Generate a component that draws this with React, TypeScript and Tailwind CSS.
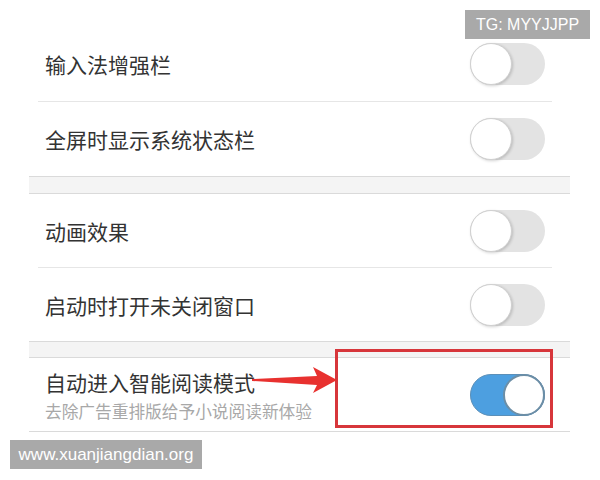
import React from "react";

const Toggle = ({ on = false }: { on?: boolean }) =>
  on ? (
    <div className="relative w-[75px] h-[42px] rounded-full bg-[#4d9fe0] border border-[#5b8fb8]">
      <div className="absolute right-[-1px] top-[-1px] w-[42px] h-[42px] rounded-full bg-white border-2 border-[#6c8ea6]" />
    </div>
  ) : (
    <div className="relative w-[75px] h-[42px] rounded-full bg-[#e3e3e3]">
      <div className="absolute left-0 top-0 w-[42px] h-[42px] rounded-full bg-white border border-[#d0d0d0] shadow-[1px_1px_3px_rgba(0,0,0,0.18)]" />
    </div>
  );

const Row = ({ label, h, on }: { label: string; h: string; on?: boolean }) => (
  <div className={`flex items-center justify-between pl-[16px] pr-[25px] ${h}`}>
    <span className="text-[21px] leading-[28px] text-[#333]">{label}</span>
    <Toggle on={on} />
  </div>
);

const Divider = () => <div className="h-px bg-[#e6e6e6] ml-[9px] mr-[18px]" />;

const Section = () => (
  <div className="border-y border-[#dadada] bg-[#f4f4f4] h-[18px]" />
);

export default function App() {
  return (
    <div
      className="relative w-[600px] h-[480px] bg-white overflow-hidden"
      style={{ fontFamily: '"Noto Sans CJK SC", "Noto Sans", sans-serif' }}
    >
      <div className="ml-[29px] w-[541px] pt-[26px]">
        <Row label="输入法增强栏" h="h-[75px]" />
        <Divider />
        <Row label="全屏时显示系统状态栏" h="h-[74px]" />
        <Section />
        <Row label="动画效果" h="h-[73px]" />
        <Divider />
        <Row label="启动时打开未关闭窗口" h="h-[73px]" />
        <div className="border-y border-[#dadada] bg-[#f4f4f4] h-[17px]" />
        <div className="flex items-center justify-between pl-[16px] pr-[25px] h-[73px]">
          <div className="flex flex-col gap-[5px]">
            <span className="text-[21px] leading-[28px] text-[#333]">自动进入智能阅读模式</span>
            <span className="text-[16.7px] leading-[20px] text-[#a8a8a8] whitespace-nowrap">
              去除广告重排版给予小说阅读新体验
            </span>
          </div>
          <Toggle on />
        </div>
        <div className="h-px bg-[#dadada]" />
      </div>

      {/* red annotation box */}
      <div className="absolute left-[335px] top-[349px] w-[218px] h-[79px] border-[3px] border-[#d7363b]" />
      {/* arrow */}
      <svg className="absolute left-0 top-0" width="600" height="480" viewBox="0 0 600 480">
        <polygon
          points="252,379 317,376 313,367 337,380 313,393 317,385 252,381"
          fill="#e8312f"
        />
      </svg>

      {/* watermarks */}
      <div
        className="absolute left-[465px] top-[10px] w-[125px] h-[29px] bg-[#a9a9a9] text-white text-[16px] flex items-center justify-center"
        style={{ fontFamily: '"Liberation Sans", Arial, sans-serif' }}
      >
        TG: MYYJJPP
      </div>
      <div
        className="absolute left-[10px] top-[440px] w-[192px] h-[29px] bg-[#a9a9a9] text-white text-[17px] flex items-center justify-center"
        style={{ fontFamily: '"Liberation Sans", Arial, sans-serif' }}
      >
        www.xuanjiangdian.org
      </div>
    </div>
  );
}
